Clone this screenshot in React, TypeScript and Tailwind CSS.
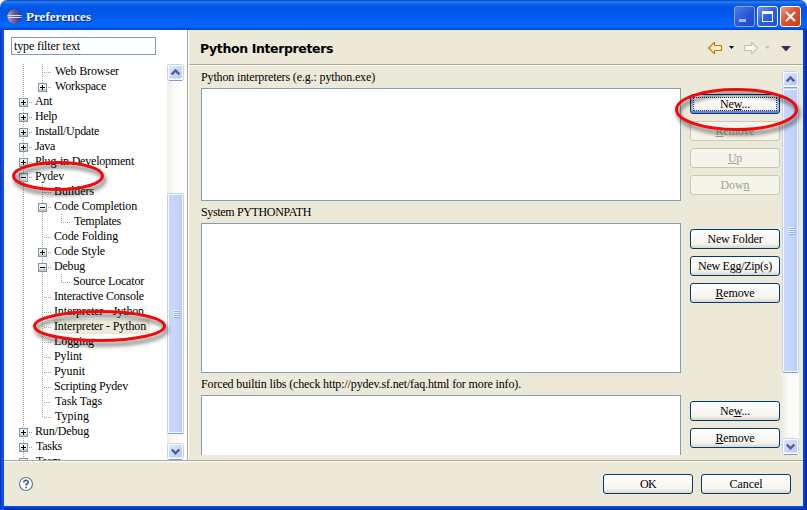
import { useLayoutEffect, useRef, useState, type ReactNode } from "react";

/** Spreads its text over a fixed width by adjusting the letter spacing. */
function Fit({ w, children }: { w: number; children: ReactNode }) {
  const ref = useRef<HTMLSpanElement>(null);
  const [spacing, setSpacing] = useState(0);
  useLayoutEffect(() => {
    const el = ref.current;
    if (!el) return;
    const count = (el.textContent ?? "").length || 1;
    el.style.letterSpacing = "0px";
    const next = (w - el.getBoundingClientRect().width) / count;
    el.style.letterSpacing = `${next}px`;
    setSpacing(next);
  }, [w]);
  return (
    <span ref={ref} className="inline-block whitespace-pre" style={{ letterSpacing: `${spacing}px` }}>
      {children}
    </span>
  );
}

type Cell = "line" | "tee" | "end" | "plus" | "minus" | "plusEnd" | "blank";
type Item = { label: string; w: number; cells: Cell[]; x: number; selected?: boolean };

const items: Item[] = [
  { label: "Web Browser", w: 64, x: 55, cells: ["line", "tee"] },
  { label: "Workspace", w: 51, x: 55, cells: ["line", "plusEnd"] },
  { label: "Ant", w: 17, x: 35, cells: ["plus"] },
  { label: "Help", w: 22, x: 35, cells: ["plus"] },
  { label: "Install/Update", w: 64, x: 35, cells: ["plus"] },
  { label: "Java", w: 20, x: 35, cells: ["plus"] },
  { label: "Plug-in Development", w: 99, x: 35, cells: ["plus"] },
  { label: "Pydev", w: 29, x: 35, cells: ["minus"] },
  { label: "Builders", w: 40, x: 54, cells: ["line", "tee"] },
  { label: "Code Completion", w: 83, x: 54, cells: ["line", "minus"] },
  { label: "Templates", w: 47, x: 74, cells: ["line", "line", "end"] },
  { label: "Code Folding", w: 64, x: 54, cells: ["line", "tee"] },
  { label: "Code Style", w: 51, x: 54, cells: ["line", "plus"] },
  { label: "Debug", w: 31, x: 54, cells: ["line", "minus"] },
  { label: "Source Locator", w: 71, x: 73, cells: ["line", "line", "end"] },
  { label: "Interactive Console", w: 90, x: 54, cells: ["line", "tee"] },
  { label: "Interpreter - Jython", w: 90, x: 54, cells: ["line", "tee"] },
  { label: "Interpreter - Python", w: 92, x: 54, cells: ["line", "tee"], selected: true },
  { label: "Logging", w: 40, x: 54, cells: ["line", "tee"] },
  { label: "Pylint", w: 28, x: 54, cells: ["line", "tee"] },
  { label: "Pyunit", w: 31, x: 54, cells: ["line", "tee"] },
  { label: "Scripting Pydev", w: 74, x: 54, cells: ["line", "tee"] },
  { label: "Task Tags", w: 47, x: 55, cells: ["line", "tee"] },
  { label: "Typing", w: 34, x: 55, cells: ["line", "end"] },
  { label: "Run/Debug", w: 54, x: 35, cells: ["plus"] },
  { label: "Tasks", w: 26, x: 36, cells: ["plus"] },
  { label: "Team", w: 25, x: 36, cells: ["plus"] },
];

function Connector({ kind, odd }: { kind: Cell; odd: boolean }) {
  const box = kind === "plus" || kind === "minus" || kind === "plusEnd";
  const short = kind === "end" || kind === "plusEnd";
  return (
    <svg width="19" height="15" className="block shrink-0" shapeRendering="crispEdges">
      {kind !== "blank" && (
        <path d={short ? "M4.5 0V9" : "M4.5 0V15"} stroke="#aca899" strokeDasharray="1 1" strokeDashoffset={odd ? 1 : 0} />
      )}
      {kind !== "line" && kind !== "blank" && (
        <path d={box ? "M10 8.5H13" : "M6 8.5H14"} stroke="#aca899" strokeDasharray="1 1" />
      )}
      {box && (
        <>
          <rect x="0.5" y="4.5" width="8" height="8" fill="#f4f2ec" stroke="#7898b5" />
          <path d="M1 10.5H8M1 11.5H8" stroke="#d2cabb" />
          <path d={kind === "minus" ? "M2 8.5H7" : "M2 8.5H7M4.5 6V11"} stroke="#000" />
        </>
      )}
    </svg>
  );
}

function Row({ item, index }: { item: Item; index: number }) {
  const edge = 19 + item.cells.length * 19;
  return (
    <div className="flex h-[15px] shrink-0 pl-[15px]">
      {item.cells.map((c, i) => (
        <Connector key={i} kind={c} odd={index % 2 === 1} />
      ))}
      <span
        className={
          item.selected
            ? "h-[15px] bg-[#ece9d8] pr-[4px] leading-[15px]"
            : "h-[15px] leading-[15px]"
        }
        style={{ marginLeft: item.x - edge }}
      >
        <Fit w={item.w}>{item.label}</Fit>
      </span>
    </div>
  );
}

function ArrowButton({ down }: { down?: boolean }) {
  return (
    <svg width="17" height="17" viewBox="0 0 17 17" className="block shrink-0">
      <rect x="0.5" y="0.5" width="16" height="16" rx="2" fill="#fff" stroke="#c3d2f3" />
      <rect x="1.5" y="1.5" width="14" height="13.5" rx="1.5" fill="url(#thumb)" stroke="#fff" />
      <path d={down ? "M4.7 6.5L8.5 10.3L12.3 6.5" : "M4.7 10.3L8.5 6.5L12.3 10.3"} fill="none" stroke="#4d6185" strokeWidth="2.4" />
      <path d="M2 16.5H15" stroke="#7d9fd8" />
    </svg>
  );
}

function Thumb({ className }: { className: string }) {
  return (
    <div
      className={`flex w-[17px] shrink-0 flex-col items-center justify-center gap-px rounded-[2px] border border-[#c3d2f3] border-b-[#7d9fd8] bg-[linear-gradient(90deg,#c9d8fc,#c4d4fd_65%,#b7c9f6)] shadow-[inset_0_0_0_1px_#f5f8ff] ${className}`}
    >
      {[0, 1, 2, 3].map((i) => (
        <i key={i} className="block h-px w-[6px] bg-[#eef4fe] shadow-[1px_1px_0_#8cb0f8]" />
      ))}
    </div>
  );
}

function Button({ children, w, kind = "normal" }: { children: ReactNode; w: number; kind?: "normal" | "focus" | "off" }) {
  const look = {
    normal: "border-[#003c74] bg-[linear-gradient(#ffffff,#f5f4ee_75%,#dcd6cb)] text-black",
    focus:
      "border-[#003c74] bg-[linear-gradient(#ffffff,#f5f4ee_75%,#e4dfd5)] text-black shadow-[inset_0_2px_0_#cee7ff,inset_0_-2px_0_#6982ee,inset_2px_0_0_#a5bff0,inset_-2px_0_0_#a5bff0]",
    off: "border-[#c9c7ba] bg-[#f5f4ea] text-[#a1a192]",
  }[kind];
  return (
    <button className={`flex h-[20px] w-[90px] shrink-0 items-center justify-center rounded-[3px] border leading-[14px] ${look}`}>
      {kind === "focus" ? (
        <span className="flex h-[14px] w-[84px] items-center justify-center border border-dotted border-[#333]">
          <Fit w={w}>{children}</Fit>
        </span>
      ) : (
        <Fit w={w}>{children}</Fit>
      )}
    </button>
  );
}

function Key({ children }: { children: ReactNode }) {
  return <span className="underline decoration-1 underline-offset-[1px]">{children}</span>;
}

function Ring({ className, w, h }: { className: string; w: number; h: number }) {
  return (
    <svg width={w} height={h} className={`pointer-events-none absolute overflow-visible drop-shadow-[2px_4px_2px_rgba(0,0,0,0.6)] ${className}`}>
      <ellipse cx={w / 2} cy={h / 2} rx={w / 2 - 1.5} ry={h / 2 - 1.5} fill="none" stroke="#f00a0a" strokeWidth="3" />
    </svg>
  );
}

function TitleBar() {
  const base = "block h-[21px] w-[21px] rounded-[3px] border";
  return (
    <header className="flex h-[30px] shrink-0 items-center rounded-t-[7px] bg-[linear-gradient(#0841b8_0px,#2c80f4_2px,#0c62ee_4px,#0055e3_8px,#0058ec_16px,#0265fe_23px,#0062f8_27px,#0043cd_30px)] pr-[6px] pl-[7px]">
      <svg width="15" height="15" viewBox="0 0 15 15" className="mt-[2px]">
        <circle cx="7.5" cy="7.5" r="6.9" fill="url(#globe)" />
        <path d="M0.5 6.5H14.5M0.5 8.5H14.5" stroke="#d9dcf5" strokeWidth="1" />
      </svg>
      <h1 className="mt-[3px] ml-[4px] font-['Liberation_Serif',serif] text-[13px] leading-[18px] font-bold text-white [text-shadow:1px_1px_0_#0a1883]">
        <Fit w={65}>Preferences</Fit>
      </h1>
      <div className="mt-[3px] ml-auto flex gap-[2px]">
        <span className={`${base} border-[#85a5ee] bg-[linear-gradient(135deg,#4f7ae6,#2653d4_60%,#1e49c8)]`}>
          <i className="mt-[12px] ml-[4px] block h-[3px] w-[7px] bg-[#9db7f4]" />
        </span>
        <span className={`${base} border-white bg-[linear-gradient(135deg,#6d95f2,#2c60e4_50%,#1e51d8)]`}>
          <i className="mt-[4px] ml-[4px] block h-[11px] w-[11px] border border-t-[3px] border-white" />
        </span>
        <span className={`${base} border-white bg-[linear-gradient(135deg,#f09a80,#e1512e_45%,#c83c14)]`}>
          <svg width="19" height="19" className="block">
            <path d="M5 5L14 14M14 5L5 14" stroke="#fff" strokeWidth="2.2" />
          </svg>
        </span>
      </div>
    </header>
  );
}

function NavIcons() {
  return (
    <svg width="86" height="14" viewBox="0 0 86 14" className="block">
      <path d="M2.6 7L8 1.6H8.5V4.5H15.5V9.5H8.5V12.4H8Z" fill="#fff0b8" stroke="#c07c10" strokeWidth="1.2" strokeLinejoin="round" />
      <path d="M23 5H28L25.5 8Z" fill="#000" />
      <path d="M51.4 7L46 1.6H45.5V4.5H38.5V9.5H45.5V12.4H46Z" fill="#f8f7f0" stroke="#c5c2b4" strokeWidth="1.2" strokeLinejoin="round" />
      <path d="M59 5H64L61.5 8Z" fill="#c5c2b4" />
      <path d="M75 5H85L80 10.5Z" fill="#3c2b5e" />
    </svg>
  );
}

const track = "flex w-[17px] shrink-0 flex-col bg-[linear-gradient(90deg,#eeede5,#fbfaf7_40%,#ffffff)]";

export default function App() {
  return (
    <div className="relative flex h-[510px] w-[807px] flex-col overflow-hidden bg-white font-['Liberation_Serif',serif] text-[12px] text-black">
      <svg width="0" height="0" className="absolute">
        <defs>
          <linearGradient id="thumb" x1="0" y1="0" x2="1" y2="1">
            <stop offset="0" stopColor="#dfe8ff" />
            <stop offset="1" stopColor="#b3c8f7" />
          </linearGradient>
          <linearGradient id="globe" x1="0" y1="0" x2="1" y2="0">
            <stop offset="0" stopColor="#b9a3b5" />
            <stop offset="0.4" stopColor="#75659f" />
            <stop offset="1" stopColor="#33307c" />
          </linearGradient>
        </defs>
      </svg>
      <TitleBar />
      <div className="flex min-h-0 flex-1 bg-[linear-gradient(#0a5cf0,#0a50e6_97%,#001ea0)]">
        <div className="w-[4px] shrink-0 bg-[linear-gradient(90deg,#0022b8,#0a4ae0_1.5px,#0a5cf4_3px,#0048e0)]" />
        <div className="flex min-w-0 flex-1 flex-col">
          <div className="flex h-[430px] shrink-0">
            <aside className="flex w-[184px] shrink-0 flex-col border-r border-[#aca899] bg-white pt-[7px]">
              <div className="ml-[7px] h-[18px] w-[145px] shrink-0 border border-[#7f9db9] pl-[2px] leading-[16px]">
                <Fit w={66}>type filter text</Fit>
              </div>
              <div className="mt-[9px] flex h-[396px] overflow-hidden">
                <div className="flex w-[163px] shrink-0 flex-col">
                  {items.map((item, i) => (
                    <Row key={item.label} item={item} index={i} />
                  ))}
                </div>
                <div className={`${track} h-[396px]`}>
                  <ArrowButton />
                  <Thumb className="mt-[112px] h-[241px]" />
                  <div className="mt-auto">
                    <ArrowButton down />
                  </div>
                </div>
              </div>
            </aside>
            <main className="flex min-w-0 flex-1 flex-col border-l border-white bg-[#ece9d8]">
              <div className="flex h-[36px] shrink-0 items-center justify-between border-b border-white pr-[11px] pl-[11px] shadow-[inset_0_-1px_0_#aca899]">
                <h2 className="pt-[2px] font-['DejaVu_Sans',sans-serif] text-[12.5px] leading-[16px] font-bold">
                  <Fit w={133}>Python Interpreters</Fit>
                </h2>
                <NavIcons />
              </div>
              <div className="flex h-[389px] shrink-0 pt-[5px] pl-[12px]">
                <div className="flex w-[480px] shrink-0 flex-col overflow-hidden">
                  <div className="h-[17px] shrink-0 leading-[12px]">
                    <Fit w={174}>Python interpreters (e.g.: python.exe)</Fit>
                  </div>
                  <div className="h-[113px] shrink-0 border border-[#7f9db9] bg-white" />
                  <div className="h-[22px] shrink-0 pt-[4px] leading-[14px]">
                    <Fit w={110}>System PYTHONPATH</Fit>
                  </div>
                  <div className="h-[150px] shrink-0 border border-[#7f9db9] bg-white" />
                  <div className="h-[22px] shrink-0 pt-[4px] leading-[14px]">
                    <Fit w={320}>Forced builtin libs (check http://pydev.sf.net/faq.html for more info).</Fit>
                  </div>
                  <div className="h-[60px] shrink-0 border border-b-0 border-[#7f9db9] bg-white" />
                </div>
                <div className="ml-[9px] flex w-[90px] shrink-0 flex-col gap-[7px] pt-[23px]">
                  <Button w={30} kind="focus">Ne<Key>w</Key>...</Button>
                  <Button w={39} kind="off"><Key>R</Key>emove</Button>
                  <Button w={14} kind="off"><Key>U</Key>p</Button>
                  <Button w={29} kind="off">Dow<Key>n</Key></Button>
                  <div className="mt-[27px] flex flex-col gap-[7px]">
                    <Button w={55}>New Folder</Button>
                    <Button w={74}>New Egg/Zip(s)</Button>
                    <Button w={39}><Key>R</Key>emove</Button>
                  </div>
                  <div className="mt-[91px] flex flex-col gap-[7px]">
                    <Button w={30}>Ne<Key>w</Key>...</Button>
                    <Button w={39}><Key>R</Key>emove</Button>
                  </div>
                </div>
                <div className={`${track} ml-[2px] h-[384px]`}>
                  <ArrowButton />
                  <Thumb className="h-[285px]" />
                  <div className="mt-auto">
                    <ArrowButton down />
                  </div>
                </div>
              </div>
            </main>
          </div>
          <footer className="flex flex-1 items-start border-t border-[#aca899] bg-[#ece9d8] pt-[13px] pr-[12px] pl-[14px] shadow-[inset_0_1px_0_#fff]">
            <svg width="16" height="16" viewBox="0 0 16 16" className="mt-[2px] block">
              <circle cx="8" cy="8" r="6.5" fill="#fff" stroke="#62799b" strokeWidth="1.2" />
              <path d="M5.8 6.4C5.8 3.6 10.3 3.7 10.3 6.2C10.3 7.8 8.1 7.7 8.1 9.4M8.1 10.7V12.2" fill="none" stroke="#3f5a85" strokeWidth="1.6" />
            </svg>
            <div className="ml-auto flex gap-[8px]">
              <Button w={16}>OK</Button>
              <Button w={33}>Cancel</Button>
            </div>
          </footer>
          <div className="h-[4px] shrink-0 bg-[linear-gradient(#0a50ea_0px,#0040d8_2px,#001a98_4px)]" />
        </div>
        <div className="w-[4px] shrink-0 bg-[linear-gradient(90deg,#0048e8,#0038d0_2px,#001a98)]" />
      </div>
      <Ring className="top-[161px] left-[12px]" w={92} h={30} />
      <Ring className="top-[310px] left-[33px]" w={133} h={32} />
      <Ring className="top-[88px] left-[675px]" w={123} h={43} />
    </div>
  );
}
